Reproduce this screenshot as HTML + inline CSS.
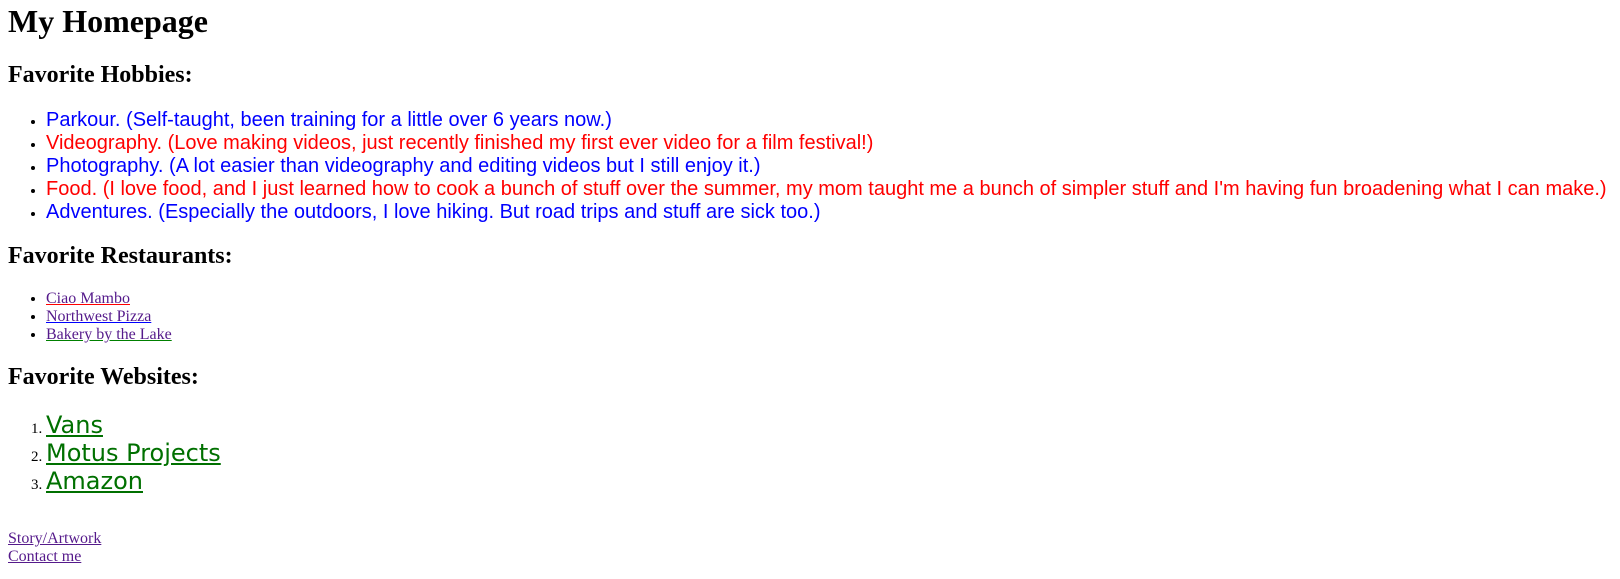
<!DOCTYPE html>
<html><head><meta charset="utf-8"><style>
body{margin:0 8px;padding-top:3px;font-family:"Liberation Serif",serif;color:#000;background:#fff}
h1{font-size:32px;line-height:37px;margin:0 0 21px}
h3{font-size:24px;line-height:28px;margin:0}
ul,ol{margin:0;padding-left:38px}
.hob{margin:20px 0 18px;font-family:"Liberation Sans",sans-serif;font-size:20px;line-height:23px;white-space:nowrap}
.hob li{height:23px}
.hob li:nth-child(odd){color:#0000ff}.hob li:nth-child(even){color:#ff0000}
.hob li::marker{color:#000;font-size:16px}
.res{margin:20px 0 19px;font-size:16px;line-height:18px}
.res li{height:18px}
.res a{color:#551a8b}
.ws{margin:20px 0 35px;font-size:15px;line-height:28px}
.ws li{height:28px}
.ws a{color:#007000;font-family:"DejaVu Sans",sans-serif;font-size:24px;line-height:28px}
.ft{font-size:16px;line-height:18px}.ft a{color:#551a8b}
</style></head><body>
<h1>My Homepage</h1>
<h3>Favorite Hobbies:</h3>
<ul class="hob">
<li>Parkour. (Self-taught, been training for a little over 6 years now.)</li>
<li>Videography. (Love making videos, just recently finished my first ever video for a film festival!)</li>
<li>Photography. (A lot easier than videography and editing videos but I still enjoy it.)</li>
<li>Food. (I love food, and I just learned how to cook a bunch of stuff over the summer, my mom taught me a bunch of simpler stuff and I'm having fun broadening what I can make.)</li>
<li>Adventures. (Especially the outdoors, I love hiking. But road trips and stuff are sick too.)</li>
</ul>
<h3>Favorite Restaurants:</h3>
<ul class="res">
<li><a href="#" style="text-decoration-color:red">Ciao Mambo</a></li>
<li><a href="#" style="text-decoration-color:blue">Northwest Pizza</a></li>
<li><a href="#" style="text-decoration-color:green">Bakery by the Lake</a></li>
</ul>
<h3>Favorite Websites:</h3>
<ol class="ws">
<li><a href="#">Vans</a></li>
<li><a href="#">Motus Projects</a></li>
<li><a href="#">Amazon</a></li>
</ol>
<div class="ft"><a href="#">Story/Artwork</a><br><a href="#">Contact me</a></div>
</body></html>
